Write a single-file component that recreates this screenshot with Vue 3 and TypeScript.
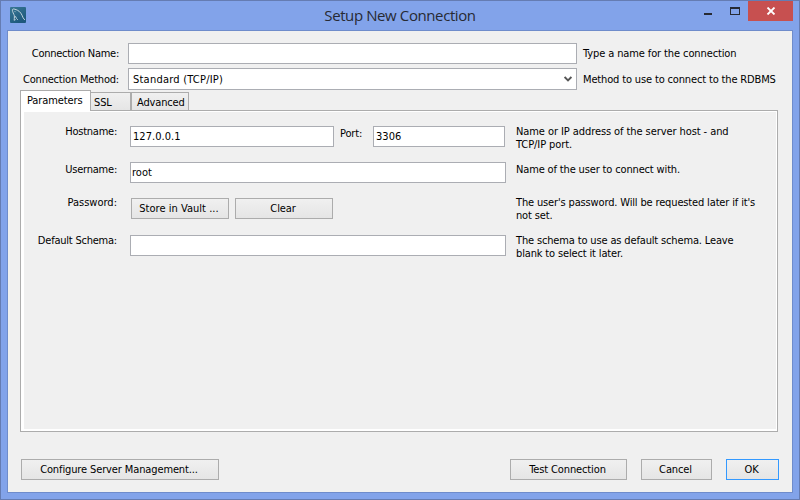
<script setup lang="ts">
import { ref } from 'vue'

const connectionName = ref('')
const hostname = ref('127.0.0.1')
const port = ref('3306')
const username = ref('root')
const schema = ref('')
const tabs = ['Parameters', 'SSL', 'Advanced']
const activeTab = ref('Parameters')
</script>

<template>
  <div class="window">
    <header class="titlebar">
      <svg class="logo" width="16" height="16" viewBox="0 0 16 16">
        <defs>
          <linearGradient id="sea" x1="0" y1="0" x2="0.6" y2="1">
            <stop offset="0" stop-color="#397895" />
            <stop offset="1" stop-color="#1d587c" />
          </linearGradient>
        </defs>
        <rect width="16" height="16" rx="1" fill="url(#sea)" />
        <path d="M4.2 13.4C3.8 12 4.8 10.6 4.4 8.8C3.8 6.8 2.4 5 2.4 3.2C2.4 1.8 3.6 1.7 5 2.3C8.2 3 10.7 5.2 12 8.2C12.7 10.1 13.4 11.7 14.8 13M4.6 10.4L5.6 9.5C6 11 6.6 12 7.8 12.8M4.2 13.2L5.6 12.6M4.8 4.3L5.5 5.1" fill="none" stroke="#bfd2dc" stroke-width="1" />
      </svg>
      <h1 class="title">Setup New Connection</h1>
      <div class="controls">
        <svg width="51" height="20" viewBox="0 0 51 20" shape-rendering="crispEdges">
          <rect x="7" y="12" width="8" height="2" fill="#272a33" />
          <path d="M33 6h10v8h-10zM34 8v5h8v-5z" fill="#272a33" fill-rule="evenodd" />
        </svg>
        <span class="close">
          <svg width="10" height="8" viewBox="0 0 10 8"><path d="M1.5 .5L8.5 7.5M8.5 .5L1.5 7.5" stroke="#fff" stroke-width="1.8" /></svg>
        </span>
      </div>
    </header>

    <main class="client">
      <section class="connection">
        <label class="label name-label">Connection Name:</label>
        <input v-model="connectionName" class="field" />
        <span class="hint name-hint">Type a name for the connection</span>
        <label class="label">Connection Method:</label>
        <div class="field combo">
          <span>Standard (TCP/IP)</span>
          <svg width="8" height="6" viewBox="0 0 8 6"><path d="M.6 .9L4 4.3L7.4 .9" fill="none" stroke="#555" stroke-width="1.9" /></svg>
        </div>
        <span class="hint">Method to use to connect to the RDBMS</span>
      </section>

      <nav class="tabs">
        <span v-for="tab in tabs" :key="tab" class="tab" :class="[tab.toLowerCase(), { active: tab === activeTab }]" @click="activeTab = tab">{{ tab }}</span>
      </nav>

      <section class="panel">
        <div class="row host-row">
          <label class="label">Hostname:</label>
          <div class="cell">
            <input v-model="hostname" class="field host" />
            <label class="port-label">Port:</label>
            <input v-model="port" class="field port" />
          </div>
          <p class="hint host-hint">Name or IP address of the server host - and<br />TCP/IP port.</p>
        </div>
        <div class="row user-row">
          <label class="label">Username:</label>
          <div class="cell"><input v-model="username" class="field user" /></div>
          <p class="hint">Name of the user to connect with.</p>
        </div>
        <div class="row pass-row">
          <label class="label">Password:</label>
          <div class="cell buttons">
            <button class="button vault">Store in Vault ...</button>
            <button class="button clear">Clear</button>
          </div>
          <p class="hint">The user's password. Will be requested later if it's<br />not set.</p>
        </div>
        <div class="row schema-row">
          <label class="label">Default Schema:</label>
          <div class="cell"><input v-model="schema" class="field" /></div>
          <p class="hint">The schema to use as default schema. Leave<br />blank to select it later.</p>
        </div>
      </section>

      <footer class="actions">
        <button class="button configure">Configure Server Management...</button>
        <button class="button test">Test Connection</button>
        <button class="button cancel">Cancel</button>
        <button class="button ok">OK</button>
      </footer>
    </main>
  </div>
</template>

<style>
body {
  margin: 0;
}
</style>

<style scoped>
* {
  box-sizing: border-box;
}
.window {
  display: flex;
  flex-direction: column;
  width: 800px;
  height: 500px;
  border: 1px solid #657cb2;
  padding: 0 6px 6px;
  background: #82a3ea;
  color: #000;
  font: 11px/13px "DejaVu Sans Condensed", "DejaVu Sans", sans-serif;
  letter-spacing: -0.15px;
}
.titlebar {
  display: flex;
  flex: none;
  height: 29px;
}
.logo {
  margin: 6px 0 0 3px;
}
.title {
  flex: 1;
  margin: 4px 0 0 77px;
  color: #272a33;
  font: 15px/20px "Open Sans", sans-serif;
  letter-spacing: -0.4px;
  text-align: center;
}
.controls {
  display: flex;
  height: 20px;
}
.close {
  display: flex;
  align-items: center;
  justify-content: center;
  width: 45px;
  height: 20px;
  background: #c75050;
}
.client {
  flex: 1;
  border: 1px solid #6f8ccb;
  background: #f0f0f0;
}
.connection {
  display: grid;
  grid-template: 21px 22px / 120px 449px 1fr;
  row-gap: 4px;
  padding-top: 12px;
  align-items: center;
}
.label {
  justify-self: end;
  text-align: right;
}
.connection .label {
  margin-right: 9px;
  letter-spacing: -0.2px;
}
.connection .name-label {
  letter-spacing: -0.28px;
}
.connection .hint {
  margin-left: 6px;
}
.name-hint {
  letter-spacing: -0.11px;
}
.field {
  display: block;
  width: 100%;
  height: 21px;
  border: 1px solid #abadb3;
  border-radius: 0;
  outline: none;
  padding: 0 3px 1px 2px;
  background: #fff;
  color: #000;
  font: inherit;
  letter-spacing: 0.05px;
}
.combo {
  display: flex;
  align-items: center;
  justify-content: space-between;
  height: 22px;
  padding: 0 4px;
  letter-spacing: 0.22px;
}
.tabs {
  display: flex;
  align-items: flex-end;
  height: 21px;
  margin: -1px 0 0 12px;
}
.tab {
  height: 18px;
  border: 1px solid #acacac;
  border-bottom: 0;
  padding: 3px 0 0 5px;
  background: linear-gradient(#f0f0f0, #e5e5e5);
}
.tab.active {
  position: relative;
  z-index: 1;
  height: 21px;
  margin-bottom: -1px;
  padding: 3px 0 0 6px;
  background: #fff;
}
.parameters {
  width: 71px;
  letter-spacing: -0.1px;
}
.ssl {
  width: 40px;
  border-left: 0;
  padding-left: 3px;
}
.advanced {
  width: 58px;
}
.panel {
  width: 758px;
  height: 322px;
  margin-left: 12px;
  border: 1px solid #acacac;
  padding: 15px 0 0 3px;
  background: #f0f0f0;
  box-shadow: inset 3px 0 #fff, inset 0 1px #fff, inset -1px 0 #fff, inset 0 -2px #fff;
}
.row {
  display: grid;
  grid-template-columns: 93px 389px 1fr;
  align-items: start;
}
.row .label {
  width: 93px;
}
.cell {
  display: flex;
  margin-left: 13px;
}
.row .hint {
  margin: 0 0 0 10px;
}
.host-row {
  height: 36px;
}
.host-row .label,
.host-row .hint,
.schema-row .label,
.schema-row .hint {
  margin-top: -1px;
}
.host-row .label {
  letter-spacing: -0.25px;
}
.host-hint {
  letter-spacing: -0.08px;
}
.host {
  width: 204px;
}
.port-label {
  width: 39px;
  padding: 1px 0 0 6px;
}
.port {
  width: 132px;
}
.user-row {
  height: 36px;
}
.user-row .label,
.user-row .hint {
  padding-top: 1px;
}
.user-row .label {
  letter-spacing: -0.22px;
}
.pass-row {
  height: 37px;
}
.pass-row .label,
.pass-row .hint {
  margin-top: -2px;
}
.pass-row .label {
  letter-spacing: 0;
}
.schema-row .label {
  letter-spacing: -0.22px;
}
.user {
  padding-left: 1px;
}
.buttons {
  gap: 6px;
  padding-left: 1px;
}
.button {
  height: 21px;
  border: 1px solid #acacac;
  border-radius: 0;
  padding: 0 2px 1px 0;
  background: linear-gradient(#f0f0f0, #e5e5e5);
  color: #000;
  font: inherit;
  letter-spacing: -0.12px;
}
.vault,
.clear {
  width: 98px;
}
.vault {
  letter-spacing: 0.03px;
}
.actions {
  display: flex;
  padding: 27px 0 0 13px;
}
.configure {
  width: 198px;
  margin-right: auto;
}
.test {
  width: 117px;
  margin-right: 14px;
}
.cancel {
  width: 71px;
  margin-right: 14px;
}
.ok {
  width: 53px;
  margin-right: 13px;
  border-color: #3399ff;
}
</style>
